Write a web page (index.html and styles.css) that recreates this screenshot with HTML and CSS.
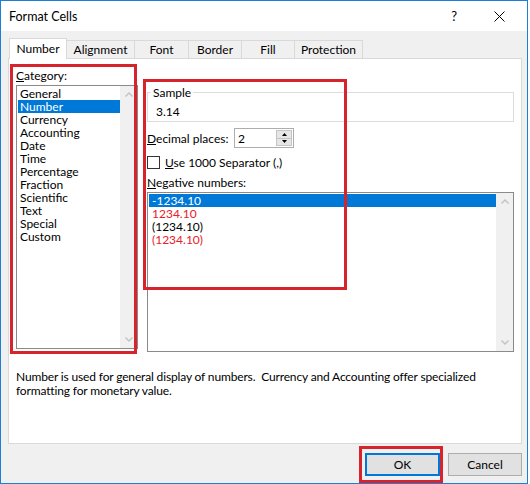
FILE: index.html
```html
<!DOCTYPE html>
<html>
<head>
<meta charset="utf-8">
<link rel="stylesheet" href="styles.css">
</head>
<body>
<div class="window">
  <div class="titlebar">
    <span class="title">Format Cells</span>
    <span class="help">?</span>
    <svg class="close" width="11" height="11" viewBox="0 0 11 11"><path d="M0.5 0.5 L10.5 10.5 M10.5 0.5 L0.5 10.5" stroke="#000" stroke-width="1" fill="none"/></svg>
  </div>
  <div class="content">
    <div class="tabs">
      <div class="tab active w-number">Number</div>
      <div class="tab w-align">Alignment</div>
      <div class="tab w-font">Font</div>
      <div class="tab w-border">Border</div>
      <div class="tab w-fill">Fill</div>
      <div class="tab w-prot">Protection</div>
    </div>
    <div class="panel">
      <div class="top">
        <div class="left">
          <div class="cat-label"><u>C</u>ategory:</div>
          <div class="listbox cat">
            <div class="items">
              <div class="item">General</div>
              <div class="item sel">Number</div>
              <div class="item">Currency</div>
              <div class="item">Accounting</div>
              <div class="item">Date</div>
              <div class="item">Time</div>
              <div class="item">Percentage</div>
              <div class="item">Fraction</div>
              <div class="item">Scientific</div>
              <div class="item">Text</div>
              <div class="item">Special</div>
              <div class="item">Custom</div>
            </div>
            <div class="vscroll">
              <div class="arrow"><svg width="8" height="5" viewBox="0 0 8 5"><polyline points="0.5,4.5 4,1 7.5,4.5" fill="none" stroke="#c2c2c2" stroke-width="1.4"/></svg></div>
              <div class="arrow"><svg width="8" height="5" viewBox="0 0 8 5"><polyline points="0.5,0.5 4,4 7.5,0.5" fill="none" stroke="#c2c2c2" stroke-width="1.4"/></svg></div>
            </div>
          </div>
        </div>
        <div class="right">
          <fieldset class="sample">
            <legend>Sample</legend>
            <div class="sample-val">3.14</div>
          </fieldset>
          <div class="decimal">
            <span class="dec-label"><u>D</u>ecimal places:</span>
            <div class="spin">
              <span>2</span>
              <div class="spin-btns">
                <div class="spin-btn"><svg width="5" height="3" viewBox="0 0 5 3"><polygon points="0,3 2.5,0 5,3" fill="#000"/></svg></div>
                <div class="spin-btn"><svg width="5" height="3" viewBox="0 0 5 3"><polygon points="0,0 5,0 2.5,3" fill="#000"/></svg></div>
              </div>
            </div>
          </div>
          <div class="check">
            <span class="cb"></span>
            <span><u>U</u>se 1000 Separator (,)</span>
          </div>
          <div class="neg-label"><u>N</u>egative numbers:</div>
          <div class="listbox neg">
            <div class="items">
              <div class="item sel">-1234.10</div>
              <div class="item red">1234.10</div>
              <div class="item">(1234.10)</div>
              <div class="item red">(1234.10)</div>
            </div>
            <div class="vscroll">
              <div class="arrow"><svg width="8" height="5" viewBox="0 0 8 5"><polyline points="0.5,4.5 4,1 7.5,4.5" fill="none" stroke="#c2c2c2" stroke-width="1.4"/></svg></div>
              <div class="arrow"><svg width="8" height="5" viewBox="0 0 8 5"><polyline points="0.5,0.5 4,4 7.5,0.5" fill="none" stroke="#c2c2c2" stroke-width="1.4"/></svg></div>
            </div>
          </div>
        </div>
      </div>
      <div class="desc">Number is used for general display of numbers.&nbsp; Currency and Accounting offer specialized<br>formatting for monetary value.</div>
    </div>
    <div class="buttons">
      <div class="btn default">OK</div>
      <div class="btn cancel">Cancel</div>
    </div>
  </div>
  <div class="mark mark-cat"></div>
  <div class="mark mark-num"></div>
  <div class="mark mark-ok"></div>
</div>
</body>
</html>
```
FILE: styles.css
```css
* { box-sizing: border-box; }
html, body { margin: 0; padding: 0; background: #fff; }
body { font-family: Lato, "Noto Sans", sans-serif; font-size: 12px; color: #000; }

.window {
  position: relative;
  width: 528px;
  height: 484px;
  border: 1px solid #1c7fd6;
  background: #f0f0f0;
  display: flex;
  flex-direction: column;
}

.titlebar {
  height: 30px;
  background: #fff;
  display: flex;
  align-items: center;
  padding-left: 8px;
  padding-right: 22px;
  flex: none;
}
.title { font-size: 12.5px; }
.help { margin-left: auto; margin-right: 37px; font-size: 13px; }
.close { display: block; }

.content { padding: 7px 5px 0 7px; flex: 1; }

.tabs { display: flex; align-items: flex-end; height: 20px; }
.tab {
  height: 18px;
  line-height: 17px;
  text-align: center;
  border: 1px solid #d9d9d9;
  border-left: none;
  border-bottom: none;
  background: #f0f0f0;
}
.tab.active {
  position: relative;
  z-index: 1;
  height: 21px;
  margin-bottom: -1px;
  margin-left: 1px;
  line-height: 20px;
  background: #fff;
  border-left: 1px solid #d9d9d9;
}
.w-number { width: 58px; }
.w-align { width: 68px; }
.w-font { width: 54px; }
.w-border { width: 53px; }
.w-fill { width: 53px; }
.w-prot { width: 68px; }

.panel {
  height: 386px;
  background: #fff;
  border: 1px solid #d9d9d9;
  padding: 10px 7px 0 7px;
}

.top { display: flex; gap: 9px; }
.left { width: 122px; flex: none; }
.cat-label { height: 13px; line-height: 13px; margin-bottom: 3px; }

.listbox { border: 1px solid #8a8a8a; display: flex; background: #fff; }
.listbox.cat { height: 264px; }
.listbox.neg { height: 160px; margin-top: 2px; }
.items { flex: 1; padding-top: 1px; }
.item { height: 13px; line-height: 13px; margin-left: 1px; padding-left: 2px; white-space: nowrap; }
.neg .item { padding-left: 3px; }
.item.sel { background: #0078d7; color: #fff; }
.item.red { color: #e8202a; }

.vscroll {
  width: 17px;
  flex: none;
  background: #f0f0f0;
  display: flex;
  flex-direction: column;
  justify-content: space-between;
}
.arrow { height: 17px; display: flex; align-items: center; justify-content: center; }
.arrow svg { display: block; }

.right { flex: 1; margin-top: 17px; }

.sample {
  margin: 0;
  padding: 0 3px;
  border: 1px solid #dcdcdc;
  min-width: 0;
}
.sample legend { padding: 0 2px; height: 13px; line-height: 13px; }
.sample-val { height: 13px; line-height: 13px; margin: 6px 0 3px 5px; }

.decimal { display: flex; align-items: center; height: 20px; margin-top: 6px; }
.dec-label { width: 87px; flex: none; }
.spin {
  width: 60px;
  height: 20px;
  border: 1px solid #adadad;
  display: flex;
  align-items: center;
  padding-left: 3px;
}
.spin-btns {
  margin-left: auto;
  margin-right: 1px;
  width: 16px;
  height: 16px;
  display: flex;
  flex-direction: column;
}
.spin-btn {
  flex: 1;
  background: #e6e6e6;
  border: 1px solid #c4c4c4;
  display: flex;
  align-items: center;
  justify-content: center;
}
.spin-btn + .spin-btn { border-top: none; }
.spin-btn svg { display: block; }

.check { display: flex; align-items: center; gap: 5px; height: 13px; margin-top: 8px; }
.cb { width: 13px; height: 13px; border: 1px solid #333; background: #fff; flex: none; }

.neg-label { margin-top: 7px; height: 14px; line-height: 14px; }

.desc { margin-top: 18px; line-height: 14px; white-space: nowrap; letter-spacing: -0.15px; }

.buttons { display: flex; justify-content: flex-end; gap: 8px; margin-top: 9px; }
.btn {
  height: 23px;
  display: flex;
  align-items: center;
  justify-content: center;
  background: #e1e1e1;
}
.btn.default { width: 75px; border: 2px solid #0078d7; }
.btn.cancel { width: 74px; border: 1px solid #adadad; }

.mark { position: absolute; border: 3px solid #d7232c; }
.mark-cat { left: 9px; top: 63px; width: 127px; height: 290px; }
.mark-num { left: 142px; top: 78px; width: 204px; height: 211px; }
.mark-ok { left: 358px; top: 445px; width: 84px; height: 37px; }
```
